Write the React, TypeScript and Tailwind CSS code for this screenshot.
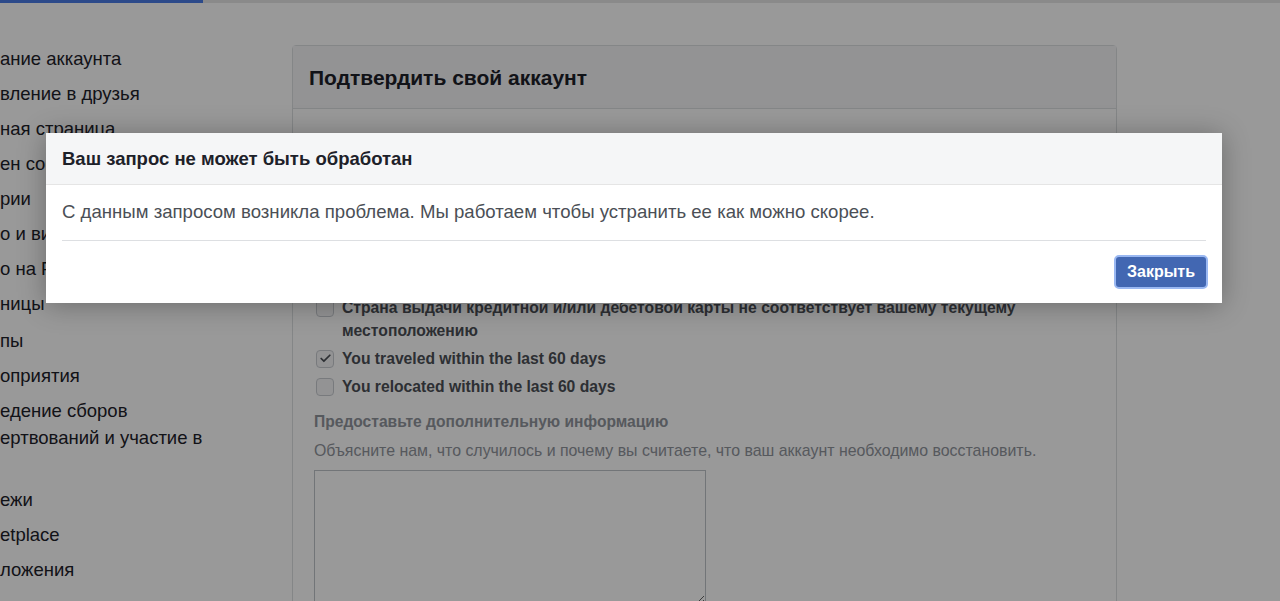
import { Check } from "lucide-react";

const MENU = [
  ["ание аккаунта"],
  ["вление в друзья"],
  ["ная страница"],
  ["ен сообщения"],
  ["рии"],
  ["о и видео"],
  ["о на Facebook"],
  ["ницы"],
  ["пы"],
  ["оприятия"],
  ["едение сборов", "ертвований и участие в", "\u00a0"],
  ["ежи"],
  ["etplace"],
  ["ложения"],
];

const REASONS = [
  {
    label: "Страна выдачи кредитной и/или дебетовой карты не соответствует вашему текущему местоположению",
    checked: false,
  },
  { label: "You traveled within the last 60 days", checked: true },
  { label: "You relocated within the last 60 days", checked: false },
];

function Box({ checked }: { checked: boolean }) {
  return (
    <span className="mt-[2.5px] flex h-[18px] w-[18px] shrink-0 items-center justify-center rounded-[4px] border border-[#c9ccd1] bg-[#f5f6f7]">
      {checked && <Check size={13} strokeWidth={3.2} className="text-[#4b4f56]" />}
    </span>
  );
}

export default function App() {
  return (
    <div className="relative h-[601px] w-[1280px] overflow-hidden bg-white font-['Liberation_Sans',Arial,sans-serif]">
      {/* top tabs strip */}
      <div className="flex h-[3px] bg-[#e6e6e6]">
        <div className="w-[203px] bg-[#4a7ce6]" />
      </div>

      <div className="flex pt-[42px]">
        {/* left menu, scrolled off to the left */}
        <div className="flex w-[292px] shrink-0 flex-col gap-2 text-[18.5px] leading-[27px] text-[#1d2129]">
          {MENU.map((lines, i) => (
            <div key={i} className={i === 8 ? "whitespace-nowrap pt-[2px]" : "whitespace-nowrap"}>
              {lines.map((l, j) => (
                <div key={j}>{l}</div>
              ))}
            </div>
          ))}
        </div>

        {/* main panel */}
        <div className="w-[825px] shrink-0 rounded-[4px] border border-[#dddfe2] bg-white">
          <div className="flex h-[63px] items-center border-b border-[#dddfe2] bg-[#f5f6f7] px-4 pt-[2px]">
            <h2 className="text-[21px] font-bold text-[#1d2129]">Подтвердить свой аккаунт</h2>
          </div>
          <div className="px-[21px] pt-4">
            <div className="h-[171px] overflow-hidden pt-[40px] text-[15.7px] leading-[20px] text-[#1d2129]">
              <p>Мы заметили необычную активность в вашем аккаунте. Укажите, что из перечисленного относится к вам.</p>
            </div>
            <div className="flex flex-col gap-[5px]">
              {REASONS.map((r) => (
                <label key={r.label} className="flex gap-[8px] pl-[2px]">
                  <Box checked={r.checked} />
                  <span className="pr-[40px] text-[15.7px] font-bold leading-[23px] text-[#4b4f56]">{r.label}</span>
                </label>
              ))}
            </div>
            <div className="mt-[14px] text-[15.6px] font-bold leading-[20px] text-[#90949c]">
              Предоставьте дополнительную информацию
            </div>
            <div className="mt-[9px] text-[15.9px] leading-[20px] text-[#90949c]">
              Объясните нам, что случилось и почему вы считаете, что ваш аккаунт необходимо восстановить.
            </div>
            <textarea className="mt-[9px] block h-[135px] w-[392px] border border-[#bec3c9] bg-white" />
          </div>
        </div>
      </div>

      {/* dim overlay */}
      <div className="absolute inset-0 bg-black/40" />

      {/* dialog */}
      <div className="absolute left-[46px] top-[133px] w-[1176px] bg-white shadow-[0_2px_26px_rgba(0,0,0,0.3)]">
        <div className="flex h-[52px] items-center border-b border-[#e5e5e5] bg-[#f5f6f7] px-4">
          <h3 className="text-[18.5px] font-bold text-[#1d2129]">Ваш запрос не может быть обработан</h3>
        </div>
        <div className="px-4 pt-[17px]">
          <p className="text-[18.6px] leading-[20px] text-[#4b4f56]">
            С данным запросом возникла проблема. Мы работаем чтобы устранить ее как можно скорее.
          </p>
          <div className="mt-[18px] h-px bg-[#dddfe2]" />
        </div>
        <div className="flex justify-end px-[14px] pb-[14px] pt-[14px]">
          <button className="h-[34px] w-[94px] rounded-[5px] border-2 border-[#9ab8f2] bg-[#4267b2] text-[16px] font-bold text-white">
            Закрыть
          </button>
        </div>
      </div>
    </div>
  );
}
